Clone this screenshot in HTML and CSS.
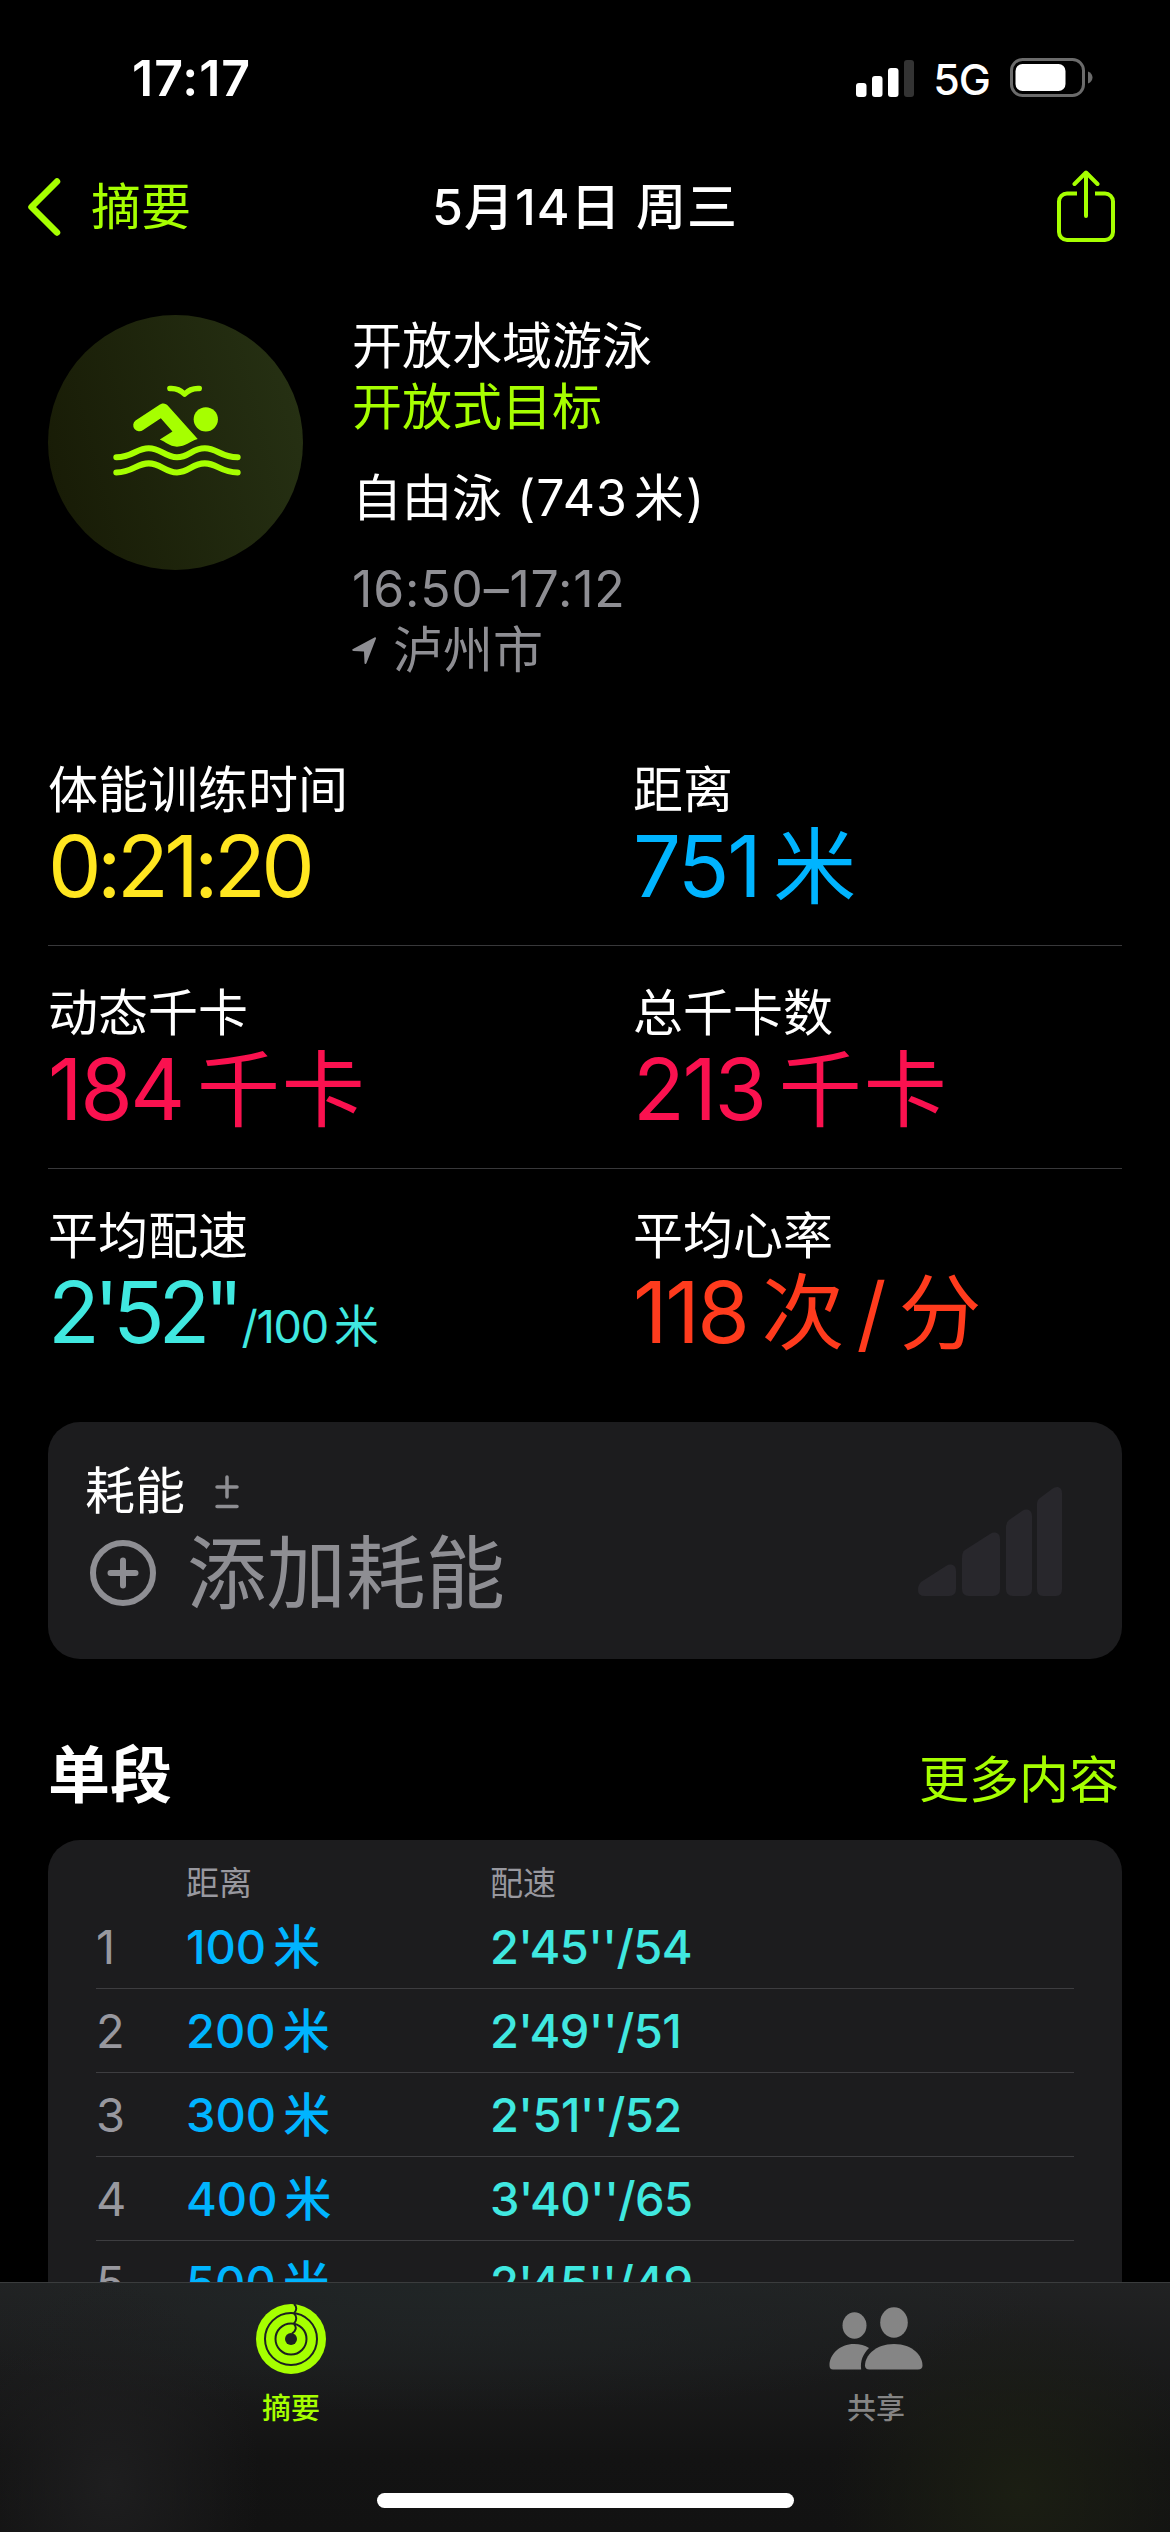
FILE: index.html
```html
<!DOCTYPE html>
<html lang="zh-CN">
<head>
  <meta charset="UTF-8" />
  <meta name="viewport" content="width=device-width, initial-scale=1.0" />
  <title>5月14日 周三</title>
  <link rel="stylesheet" href="styles.css">
</head>
<body>
  <div class="screen">
    <!-- 状态栏 -->
    <div class="status-bar">
      <span class="time">17:17</span>
      <div class="status-icons">
        <svg class="signal" width="58" height="38" viewBox="0 0 58 38" fill="#fff">
          <rect x="0" y="24" width="10.5" height="14" rx="3" />
          <rect x="16" y="17" width="10.5" height="21" rx="3" />
          <rect x="32" y="9" width="10.5" height="29" rx="3" />
          <rect x="48" y="1" width="10" height="37" rx="3" fill="#333" />
        </svg>
        <span class="network">5G</span>
        <svg class="battery" width="83" height="40" viewBox="0 0 83 40">
          <rect x="1.5" y="1.5" width="72" height="36" rx="11" fill="none" stroke="#6b6b6b" stroke-width="3" />
          <rect x="5.5" y="6" width="50" height="27" rx="7" fill="#fff" />
          <path d="M78 13.5c3 1 4.500 3.500 4.500 6s-1.500 5-4.500 6z" fill="#6b6b6b" />
        </svg>
      </div>
    </div>

    <!-- 导航栏 -->
    <header class="nav">
      <a class="back" href="#">
        <svg width="36" height="60" viewBox="0 0 36 60" fill="none" stroke="#a6ff00" stroke-width="6.500" stroke-linecap="round" stroke-linejoin="round">
          <path d="M31 4.500L5.500 30 31 55.500" />
        </svg>
        <span>摘要</span>
      </a>
      <h1>5月14日 周三</h1>
      <a class="share" href="#" aria-label="共享">
        <svg width="58" height="74" viewBox="0 0 58 74" fill="none" stroke="#a6ff00" stroke-width="4" stroke-linecap="round" stroke-linejoin="round">
          <path d="M20 23.500H10a8 8 0 0 0-8 8V62a8 8 0 0 0 8 8H48a8 8 0 0 0 8-8V31.500a8 8 0 0 0-8-8H38" stroke-linecap="butt" />
          <path d="M29 46V3M17.500 14L29 2.500 40.500 14" />
        </svg>
      </a>
    </header>

    <!-- 体能训练概览 -->
    <section class="workout">
      <div class="workout-icon">
        <svg width="132" height="93" viewBox="0 0 130 92" fill="#a6ff00">
          <g fill="none" stroke="#a6ff00" stroke-linecap="round" stroke-linejoin="round">
            <path d="M4 72C20 72 24 63 36 63S52 72 64 72 79 63 91.500 63 107 72 124 72" stroke-width="6" transform="translate(0 -.5)" />
            <path d="M4 87C20 87 24 78 36 78S52 87 64 87 79 78 91.500 78 107 87 124 87" stroke-width="6" transform="translate(0 -.5)" />
            <path d="M57 3.500c7-.500 11 2 14.500 5.500 3.500-3.500 7.500-6 14.500-5.500" stroke-width="5.500" />
          </g>
          <circle cx="92.500" cy="34" r="12" />
          <path d="M30.500 44.500a6 6 0 0 1-7.500-9.500L46 20c3.500-2.500 7-2 9.500 1L84.500 53.500C76 56 73 61 64 61 56 61 53 56 47 54L59.500 46 48 33z" />
        </svg>
      </div>
      <div class="workout-info">
        <p>开放水域游泳</p>
        <p class="green">开放式目标</p>
        <p class="gap">自由泳<span class="paren"> (743</span><span class="m">米</span><span class="close">)</span></p>
        <p class="gap gray hours">16:50–17:12</p>
        <p class="gray place">
          <svg width="25" height="28" viewBox="0 0 25 28" fill="#8e8e93">
            <path d="M24 1.500L14.500 26c-.500 1.500-2 1.300-2-.200L12 14.500 1.500 14C-.2 14-.2 12.500 1 12L22.500.500c1-.500 1.800.200 1.500 1z" />
          </svg>
          <span>泸州市</span>
        </p>
      </div>
    </section>

    <!-- 指标 -->
    <section class="metrics">
      <div class="metric-row">
        <div class="metric">
          <div class="label">体能训练时间</div>
          <div class="value yellow duration">0:21:20</div>
        </div>
        <div class="metric">
          <div class="label">距离</div>
          <div class="value blue">751<span class="unit">米</span></div>
        </div>
      </div>
      <div class="metric-row">
        <div class="metric">
          <div class="label">动态千卡</div>
          <div class="value pink">184<span class="unit">千卡</span></div>
        </div>
        <div class="metric">
          <div class="label">总千卡数</div>
          <div class="value pink">213<span class="unit">千卡</span></div>
        </div>
      </div>
      <div class="metric-row">
        <div class="metric">
          <div class="label">平均配速</div>
          <div class="value teal avg-pace">2'52"<span class="per">/100<span class="m">米</span></span></div>
        </div>
        <div class="metric">
          <div class="label">平均心率</div>
          <div class="value red">118<span class="unit">次<span class="slash">/</span>分</span></div>
        </div>
      </div>
    </section>

    <!-- 耗能 -->
    <section class="card effort">
      <div>
        <div class="effort-title">
          <span>耗能</span>
          <svg width="24" height="34" viewBox="0 0 24 34" stroke="#8e8e93" stroke-width="3.500" stroke-linecap="round">
            <path d="M12 2v20M2 12h20M2 31.500h20" />
          </svg>
        </div>
        <div class="effort-add">
          <svg width="68" height="68" viewBox="0 0 68 68" fill="none" stroke="#8e8e93" stroke-width="6" stroke-linecap="round">
            <circle cx="34" cy="34" r="30" />
            <path d="M34 21.500v25M21.500 34h25" />
          </svg>
          <span>添加耗能</span>
        </div>
      </div>
      <svg class="effort-bars" width="144" height="112" viewBox="0 0 144 112" fill="#28272c">
        <path d="M3 97L28 81c5-3 10-1 10 5v18q0 7-7 7H7q-7 0-7-6 0-5 3-8z" />
        <path d="M47 65L72 49c5-3 10-1 10 5v50q0 7-7 7H51q-7 0-7-7V73q0-6 3-8z" />
        <path d="M91 35l13-9c5-3 10-1 10 5v73q0 7-7 7h-12q-7 0-7-7V42q0-5 3-7z" />
        <path d="M122 13l12-9c5-4 10-2 10 4v96q0 7-6 7h-13q-6 0-6-7V19q0-4 3-6z" />
      </svg>
    </section>

    <!-- 单段 -->
    <div class="section-head">
      <h2>单段</h2>
      <a href="#">更多内容</a>
    </div>
    <section class="card splits">
      <div class="split-head"><span></span><span>距离</span><span>配速</span></div>
      <div class="split"><span class="num">1</span><span class="dist">100<i>米</i></span><span class="pace">2'45''/54</span></div>
      <div class="split"><span class="num">2</span><span class="dist">200<i>米</i></span><span class="pace">2'49''/51</span></div>
      <div class="split"><span class="num">3</span><span class="dist">300<i>米</i></span><span class="pace">2'51''/52</span></div>
      <div class="split"><span class="num">4</span><span class="dist">400<i>米</i></span><span class="pace">3'40''/65</span></div>
      <div class="split"><span class="num">5</span><span class="dist">500<i>米</i></span><span class="pace">2'45''/49</span></div>
    </section>
  </div>

  <!-- 底部标签栏 -->
  <nav class="tab-bar">
    <div class="tabs">
      <a class="tab active" href="#">
        <svg width="70" height="70" viewBox="0 0 70 70">
          <circle cx="35" cy="35" r="35" fill="#a6ff00" />
          <g fill="none" stroke="#1c2022" stroke-width="2">
            <circle cx="35" cy="35" r="26" />
            <circle cx="35" cy="35" r="15.500" />
            <path d="M38 0c3 2.500 3 6.500 0 9M38 9.500c3 2.500 3 7 0 10M38 20c3 3 2 7-2 9.500" />
          </g>
          <circle cx="35" cy="35" r="6" fill="#1c2022" />
        </svg>
        <span>摘要</span>
      </a>
      <a class="tab" href="#">
        <svg width="94" height="70" viewBox="0 0 94 70" fill="#858585">
          <ellipse cx="25.500" cy="21.500" rx="12" ry="13.200" />
          <ellipse cx="65" cy="18.500" rx="13.800" ry="15.200" />
          <path d="M4 65.500q-3.500 0-3.500-4C.5 50 11 40 25 40c6 0 11 1.500 15 4-6 6-9 13-7.800 21.500z" />
          <path d="M40.500 65.500q-4.500 0-4.500-4C36 52 46 40 65 40s28.500 12 28.500 21.500q0 4-4.500 4z" />
        </svg>
        <span>共享</span>
      </a>
    </div>
    <div class="home-indicator"></div>
  </nav>
</body>
</html>
```

FILE: styles.css
```css
* {
  box-sizing: border-box;
}
body {
  margin: 0;
  background: #000;
  color: #fff;
  font-family: Inter, "Noto Sans CJK SC", sans-serif;
  font-size: 50px;
  line-height: 61px;
}
h1, h2, p {
  margin: 0;
}
a {
  color: #a6ff00;
  text-decoration: none;
}
svg {
  display: block;
  flex: none;
}
.screen {
  height: 2532px;
  overflow: hidden;
}

/* Barra de estado */
.status-bar {
  display: flex;
  justify-content: space-between;
  align-items: center;
  height: 156px;
  padding: 0 77px 0 132px;
}
.time {
  font-size: 50px;
  font-weight: 600;
  letter-spacing: 1px;
}
.status-icons {
  display: flex;
  align-items: center;
}
.network {
  font-size: 43px;
  font-weight: 500;
  letter-spacing: -1px;
  margin: 3px 20px 0 19px;
}

/* Navegación */
.nav {
  display: grid;
  grid-template-columns: 1fr auto 1fr;
  align-items: center;
  height: 102px;
  padding: 0 26px;
}
.back {
  display: flex;
  align-items: center;
  gap: 29px;
}
.nav h1 {
  font-size: 50px;
  font-weight: 500;
  letter-spacing: 1px;
}
.share {
  justify-self: end;
  margin-right: 29px;
}

.workout {
  display: flex;
  gap: 49px;
  padding: 57px 48px 0;
}
.workout-icon {
  width: 255px;
  height: 255px;
  border-radius: 50%;
  background: linear-gradient(75deg, #171a05, #273214);
  display: flex;
  align-items: center;
  justify-content: center;
}
.workout-icon svg {
  margin: 0 0 22px 4px;
}
.workout-info {
  padding-top: 1px;
}
.workout-info .gap {
  margin-top: 30px;
}
.paren {
  letter-spacing: 1px;
}
.close {
  margin-left: 2px;
}
.hours {
  letter-spacing: .8px;
}
.green {
  color: #a6ff00;
}
.gray {
  color: #8e8e93;
}
.m {
  margin-left: 6px;
}
.place {
  display: flex;
  align-items: center;
  gap: 16px;
}

/* Métricas */
.metrics {
  padding: 42px 48px 0;
}
.metric-row {
  display: grid;
  grid-template-columns: 585px 1fr;
  height: 223px;
  padding-top: 37px;
  border-bottom: 1px solid #38383a;
}
.metric-row:last-child {
  border-bottom: none;
}
.label {
  height: 60px;
  line-height: 60px;
}
.value {
  font-size: 85px;
  line-height: 94px;
  letter-spacing: -2.4px;
  white-space: nowrap;
}
.duration {
  letter-spacing: -4.6px;
}
.avg-pace {
  letter-spacing: -6.2px;
}
.unit {
  font-size: 83px;
  letter-spacing: 2px;
  margin-left: 14px;
}
.slash {
  margin: 0 10px;
}
.per {
  font-size: 45px;
  letter-spacing: -1.2px;
  margin-left: 4px;
}
.yellow { color: #ffe620; }
.blue { color: #00b4ff; }
.pink { color: #fa114f; }
.teal { color: #40e8e0; }
.red { color: #ff3b1d; }

/* Tarjetas */
.card {
  margin: 0 48px;
  background: #1c1c1e;
  border-radius: 32px;
}
.effort {
  display: flex;
  justify-content: space-between;
  height: 237px;
  margin-top: 30px;
  padding: 39px 60px 0 37px;
}
.effort-title {
  display: flex;
  align-items: center;
  gap: 30px;
}
.effort-add {
  display: flex;
  align-items: center;
  gap: 30px;
  height: 94px;
  padding-left: 4px;
  margin-top: 4px;
  font-size: 79.5px;
  color: #8e8e93;
}
.effort-bars {
  margin-top: 24px;
}

.section-head {
  display: flex;
  justify-content: space-between;
  align-items: center;
  height: 100px;
  margin-top: 66px;
  padding: 0 51px 0 48px;
}
.section-head h2 {
  font-size: 62px;
  font-weight: 700;
}
.section-head a {
  padding-top: 10px;
}

.splits {
  height: 800px;
  margin-top: 15px;
  padding: 22px 48px 0;
}
.split-head, .split {
  display: grid;
  grid-template-columns: 90px 304px 1fr;
  align-items: center;
}
.split-head {
  height: 43px;
  font-size: 33px;
  line-height: 43px;
  color: #98989f;
}
.split {
  height: 84px;
  font-size: 47px;
  border-bottom: 1px solid #3d3d40;
}
.num {
  color: #98989f;
}
.dist {
  color: #00b4ff;
  font-weight: 500;
}
.dist i {
  font-style: normal;
  margin-left: 7px;
}
.pace {
  color: #40e8e0;
  font-weight: 500;
  letter-spacing: -.6px;
}

/* Barra inferior, por encima del contenido */
.tab-bar {
  position: fixed;
  left: 0;
  right: 0;
  bottom: 0;
  height: 250px;
  border-top: 1px solid #3a3c3d;
  background:
    radial-gradient(ellipse 190px 190px at 1020px 210px, #1b1e13, transparent),
    radial-gradient(ellipse 150px 200px at 110px 200px, #1e1e1f, transparent),
    radial-gradient(ellipse 600px 130px at 450px 0, #202526, transparent),
    linear-gradient(#212223, #131313 70%, #121212);
}
.tabs {
  display: grid;
  grid-template-columns: 582px 588px;
  height: 210px;
}
.tab {
  display: flex;
  flex-direction: column;
  align-items: center;
  padding-top: 21px;
  font-size: 29px;
  line-height: 40px;
  font-weight: 500;
  color: #858585;
}
.tab span {
  margin-top: 15px;
}
.tab.active {
  color: #a6ff00;
}
.home-indicator {
  width: 417px;
  height: 15px;
  margin: 0 auto;
  border-radius: 8px;
  background: #fff;
}
```
